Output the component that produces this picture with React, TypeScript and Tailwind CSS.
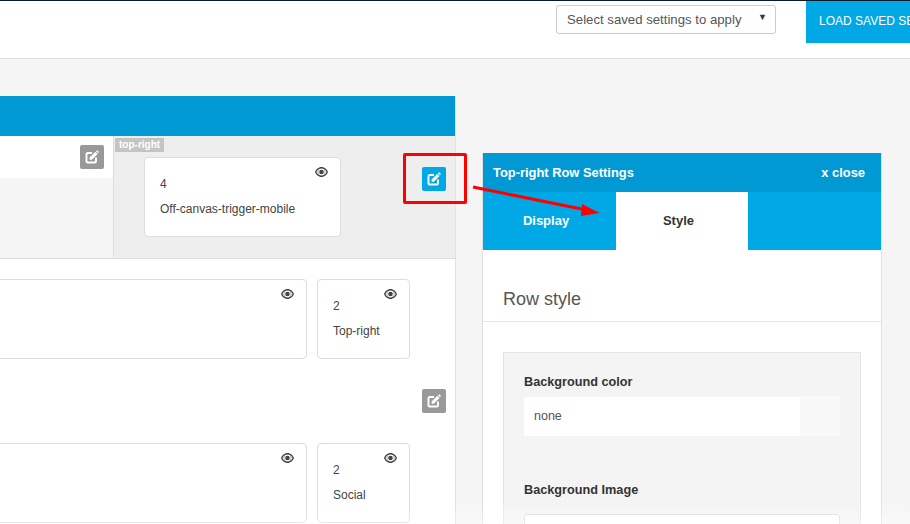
const EditIcon = () => (
  <svg width="14" height="14" viewBox="0 0 14 14" fill="none">
    <path d="M7 3H2.6A1.1 1.1 0 0 0 1.5 4.1V11.4A1.1 1.1 0 0 0 2.6 12.5H9.9A1.1 1.1 0 0 0 11 11.4V7.5" stroke="#fff" strokeWidth="1.9" />
    <path d="M4.6 7.6L10.4 1.8L12.6 4L6.8 9.8H4.6Z" fill="#fff" />
    <path d="M11 1.2L11.8 0.5Q12.2 0.2 12.6 0.5L13.6 1.5Q13.9 1.9 13.6 2.3L13.1 3.2Z" fill="#fff" />
  </svg>
);

const Eye = () => (
  <svg width="13" height="10" viewBox="0 0 13 10" className="shrink-0">
    <path fillRule="evenodd" fill="#444" d="M6.5 0C9.6 0 12 2.4 13 5C12 7.6 9.6 10 6.5 10C3.4 10 1 7.6 0 5C1 2.4 3.4 0 6.5 0ZM6.5 1.6A3.4 3.4 0 1 0 6.5 8.4A3.4 3.4 0 1 0 6.5 1.6ZM1.4 5C2 6.3 2.8 7.2 3.8 7.9A4.6 4.6 0 0 1 3.8 2.1C2.8 2.8 2 3.7 1.4 5ZM9.2 2.1A4.6 4.6 0 0 1 9.2 7.9C10.2 7.2 11 6.3 11.6 5C11 3.7 10.2 2.8 9.2 2.1Z" />
    <circle cx="6.5" cy="5" r="2.3" fill="#444" />
  </svg>
);

const EditBtn = ({ blue = false }: { blue?: boolean }) => (
  <div className={`flex h-6 w-6 shrink-0 items-center justify-center rounded-[2px] ${blue ? "bg-[#00a8e6]" : "bg-[#999999]"}`}>
    <EditIcon />
  </div>
);

const Card = ({ num, name, w }: { num?: string; name?: string; w: string }) => (
  <div className={`h-20 shrink-0 rounded-[4px] border border-[#dddddd] bg-white pl-[15px] pr-[12px] pt-[9px] text-[12px] text-[#444444] ${w}`}>
    <div className="flex h-[6px] justify-end"><Eye /></div>
    <div className="h-[27px] leading-[23px]">{num}</div>
    <div className="leading-[18px]">{name}</div>
  </div>
);

export default function App() {
  return (
    <div className="relative h-[524px] w-[910px] overflow-hidden bg-[#f5f5f5] font-['Liberation_Sans',Arial,sans-serif]">
      <header className="flex h-[59px] items-start border-b border-t border-[#dddddd] border-t-[#0a1a2e] bg-white">
        <div className="ml-[556px] mt-[4px] flex h-[29px] w-[220px] shrink-0 items-center justify-between rounded-[3px] border border-[#cccccc] pl-[10px] pr-[8px] text-[13.2px] text-[#555555]">
          <span className="whitespace-nowrap">Select saved settings to apply</span>
          <span className="mb-[4px] text-[9px] text-[#333333]">▼</span>
        </div>
        <div className="ml-[30px] flex h-[42px] w-[104px] shrink-0 items-center overflow-hidden whitespace-nowrap bg-[#00a8e6] pb-[2px] pl-[13px] text-[12px] text-white">LOAD SAVED SETTINGS</div>
      </header>

      <main className="flex items-start">
        <section className="mt-[37px] h-[500px] w-[456px] shrink-0 overflow-hidden border-r border-[#e0e0e0] bg-white">
          <div className="h-[40px] bg-[#0099d3]" />
          <div className="flex h-[123px] border-b border-[#dddddd]">
            <div className="w-[113px] shrink-0 bg-[#f5f5f5]">
              <div className="flex h-[42px] justify-end bg-white pr-[9px] pt-[9px]"><EditBtn /></div>
            </div>
            <div className="relative flex flex-1 items-start border-l border-[#dddddd] bg-[#eeeeee] pl-[30px] pt-[21px]">
              <span className="absolute left-[1px] top-[2px] h-[14px] bg-[#c4c4c4] px-[4px] text-[10px] font-bold leading-[14px] text-white">top-right</span>
              <Card num="4" name="Off-canvas-trigger-mobile" w="w-[197px]" />
              <div className="ml-[81px] mt-[10px]"><EditBtn blue /></div>
            </div>
          </div>
          <div className="flex justify-end gap-[10px] pr-[45px] pt-[20px]">
            <Card w="w-[320px]" />
            <Card num="2" name="Top-right" w="w-[93px]" />
          </div>
          <div className="flex justify-end pr-[9px] pt-[30px]"><EditBtn /></div>
          <div className="flex justify-end gap-[10px] pr-[45px] pt-[30px]">
            <Card w="w-[320px]" />
            <Card num="2" name="Social" w="w-[93px]" />
          </div>
        </section>

        <aside className="ml-[26px] mt-[94px] h-[400px] w-[400px] shrink-0 border-x border-[#e0e0e0] bg-white">
          <div className="flex h-[39px] items-center justify-between bg-[#0099d3] pl-[10px] pr-[16px] text-[12.9px] font-bold text-white">
            <span>Top-right Row Settings</span>
            <span>x close</span>
          </div>
          <div className="flex h-[58px] bg-[#00a8e6] text-[13px] font-bold">
            <div className="flex w-[133px] items-center justify-center pr-[7px] text-white">Display</div>
            <div className="flex w-[132px] items-center justify-center bg-white pr-[7px] text-[#333333]">Style</div>
          </div>
          <div className="flex h-[72px] items-end border-b border-[#e5e5e5] pb-[8px] pl-[20px] text-[18px] text-[#555555]">Row style</div>
          <div className="mx-[20px] mt-[30px] h-[200px] border border-[#e5e5e5] bg-[#f4f4f4] px-[20px] pt-[20px]">
            <div className="text-[12.7px] font-bold leading-[18px] text-[#333333]">Background color</div>
            <div className="mt-[6px] flex h-[39px] rounded-[2px] bg-white">
              <div className="flex flex-1 items-center pl-[10px] text-[12.5px] text-[#555555]">none</div>
              <div className="mt-[-1px] h-[40px] w-[40px] bg-[#f8f8f8]" />
            </div>
            <div className="mt-[45px] text-[12.7px] font-bold leading-[18px] text-[#333333]">Background Image</div>
            <div className="mt-[15px] h-[40px] rounded-[3px] border border-[#dddddd] bg-white" />
          </div>
        </aside>
      </main>

      <div className="absolute bottom-0 left-0 h-[20px] w-full bg-gradient-to-b from-transparent to-[#ffffff66]" />

      <div className="absolute left-[403px] top-[153px] h-[51px] w-[64px] rounded-[2px] border-[3px] border-[#ff0000]" />
      <svg className="absolute left-[470px] top-[180px]" width="135" height="40" viewBox="0 0 135 40">
        <line x1="3" y1="7" x2="114" y2="29.5" stroke="#ff0000" strokeWidth="3" />
        <polygon points="129.5,33 112,24 111,36" fill="#ff0000" />
      </svg>
    </div>
  );
}
